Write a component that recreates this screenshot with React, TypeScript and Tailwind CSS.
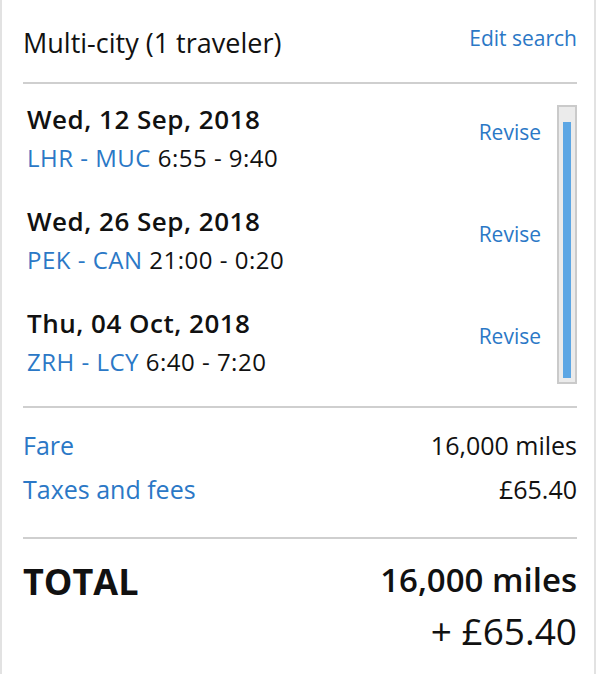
import React from 'react';

const legs = [
  { date: 'Wed, 12 Sep, 2018', route: 'LHR - MUC', time: '6:55 - 9:40' },
  { date: 'Wed, 26 Sep, 2018', route: 'PEK - CAN', time: '21:00 - 0:20' },
  { date: 'Thu, 04 Oct, 2018', route: 'ZRH - LCY', time: '6:40 - 7:20' },
];

export default function App() {
  return (
    <div
      className="w-[596px] min-h-[674px] bg-white border-x-2 border-[#e2e2e2] pl-[21px] pr-[17px] text-[#111]"
      style={{ fontFamily: '"Open Sans", "Liberation Sans", sans-serif' }}
    >
      {/* Header */}
      <div className="flex justify-between items-start pt-[26px] pb-[22px] border-b-2 border-[#cfcfcf]">
        <h1 className="text-[27px] leading-[34px]">Multi-city (1 traveler)</h1>
        <a className="text-[21px] leading-[26px] -mt-[1px] text-[#2b78c6]">Edit search</a>
      </div>

      {/* Flight legs with scrollbar */}
      <div className="flex mt-[21px] h-[279px]">
        <div className="flex-1 flex flex-col gap-[34px] pl-[4px] pr-[16px]">
          {legs.map((leg) => (
            <div key={leg.date} className="flex justify-between items-start">
              <div>
                <div className="text-[26px] leading-[28px] font-semibold tracking-[0.5px]">{leg.date}</div>
                <div className="text-[24px] leading-[30px] mt-[10px] tracking-[0.5px]">
                  <span className="text-[#2b78c6]">{leg.route}</span> {leg.time}
                </div>
              </div>
              <a className="text-[21px] leading-[26px] mt-[14px] text-[#2b78c6]">Revise</a>
            </div>
          ))}
        </div>
        <div className="w-[20px] h-full border-2 border-[#cacaca] bg-[#ebebeb] pt-[15px] pb-[4px] px-[4px]">
          <div className="w-full h-full bg-[#5ca6e4]" />
        </div>
      </div>

      {/* Fare breakdown */}
      <div className="mt-[22px] border-t-2 border-[#cfcfcf] pt-[22px] pb-[33px] flex flex-col gap-[14px] text-[25px] leading-[30px]">
        <div className="flex justify-between">
          <span className="text-[#2b78c6]">Fare</span>
          <span>16,000 miles</span>
        </div>
        <div className="flex justify-between">
          <span className="text-[#2b78c6]">Taxes and fees</span>
          <span>£65.40</span>
        </div>
      </div>

      {/* Total */}
      <div className="border-t-2 border-[#cfcfcf] pt-[21px] flex justify-between items-start">
        <span className="text-[36px] leading-[44px] font-bold">TOTAL</span>
        <div className="text-right">
          <div className="text-[33px] leading-[40px] font-semibold">16,000 miles</div>
          <div className="text-[37px] leading-[46px] mt-[8px]">+ £65.40</div>
        </div>
      </div>
    </div>
  );
}
